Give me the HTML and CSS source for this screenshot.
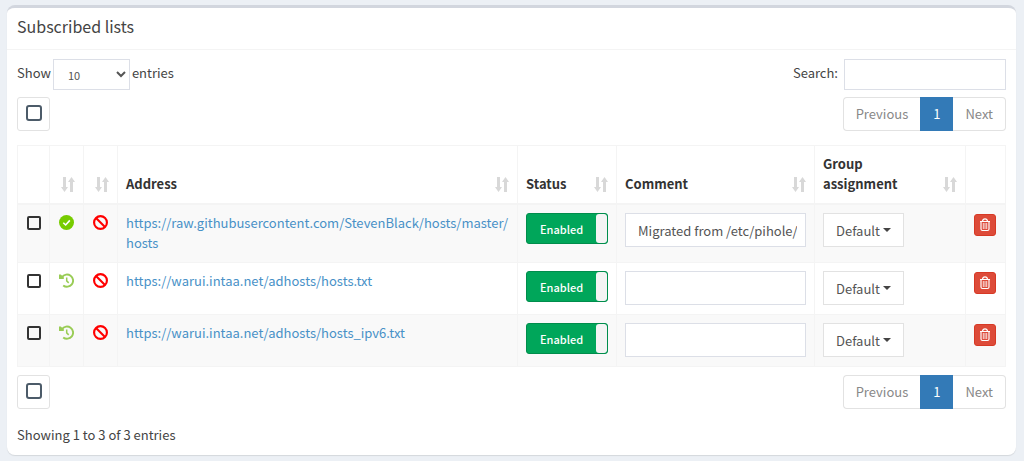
FILE: index.html
```
<!DOCTYPE html>
<html lang="en">

<head>
  <meta charset="UTF-8" />
  <meta name="viewport" content="width=device-width, initial-scale=1.0" />
  <title>Subscribed lists</title>
  <link rel="stylesheet" href="styles.css">
</head>

<body>
  <!-- Shared icons -->
  <svg class="sprite" aria-hidden="true">
    <symbol id="icon-sort" viewBox="0 0 14 15">
      <path d="M2 0h3v10h2L3.500 15 0 10h2zM9 15h3V5h2L10.500 0 7 5h2z" />
    </symbol>
    <symbol id="icon-check" viewBox="0 0 14 14">
      <circle cx="7" cy="7" r="7" fill="#7c0" />
      <path d="M4 7.200l2.200 2.100L10.100 5" fill="none" stroke="#fff" stroke-width="1.500" />
    </symbol>
    <symbol id="icon-history" viewBox="0 0 15 14">
      <path d="M3 3.600A6.100 6.100 0 1 1 4.200 11.900" fill="none" stroke="#9c5" stroke-width="1.900" />
      <path d="M0 1v4.500h4.800V3.800L1.800 1z" fill="#9c5" />
      <path d="M7.700 4v3.400l2 2" fill="none" stroke="#9c5" stroke-width="1.500" />
    </symbol>
    <symbol id="icon-ban" viewBox="0 0 14 14">
      <circle cx="7" cy="7" r="6" fill="none" stroke="#f00" stroke-width="2" />
      <path d="M2.800 2.800l8.400 8.400" stroke="#f00" stroke-width="2" />
    </symbol>
    <symbol id="icon-trash" viewBox="0 0 12 14">
      <g fill="none" stroke="#fff">
        <path d="M1 3.500h10M3.500 3.300C3.700 1.500 4.600.8 6 .8s2.300.7 2.500 2.500" stroke-width="1.200" />
        <path d="M2 3.700v7.300q0 1.500 1.500 1.500h5Q10 12.500 10 11V3.700" stroke-width="1.200" />
        <path d="M4.300 5v6M6 5v6M7.700 5v6" stroke-width=".8" />
      </g>
    </symbol>
  </svg>

  <div class="box">
    <div class="box-header">
      <h3 class="box-title">Subscribed lists</h3>
    </div>

    <div class="box-body">
      <div class="toolbar">
        <label class="length">Show
          <select class="form-control length-select">
            <option>10</option>
            <option>25</option>
            <option>50</option>
            <option>100</option>
          </select>
          entries</label>
        <label class="search">Search: <input type="search" class="form-control search-input" /></label>
      </div>

      <div class="toolbar paging-row">
        <button type="button" class="btn-select" aria-label="Select all"><span class="square"></span></button>
        <nav class="pagination">
          <a href="#">Previous</a>
          <a href="#" class="active">1</a>
          <a href="#">Next</a>
        </nav>
      </div>

      <table class="lists">
        <colgroup>
          <col class="col-check">
          <col class="col-icon">
          <col class="col-icon">
          <col>
          <col class="col-status">
          <col class="col-comment">
          <col class="col-group">
          <col class="col-action">
        </colgroup>
        <thead>
          <tr>
            <th></th>
            <th><div class="sorting"><span></span><svg><use href="#icon-sort" /></svg></div></th>
            <th><div class="sorting"><span></span><svg><use href="#icon-sort" /></svg></div></th>
            <th><div class="sorting"><span>Address</span><svg><use href="#icon-sort" /></svg></div></th>
            <th><div class="sorting"><span>Status</span><svg><use href="#icon-sort" /></svg></div></th>
            <th><div class="sorting"><span>Comment</span><svg><use href="#icon-sort" /></svg></div></th>
            <th><div class="sorting"><span>Group<br />assignment</span><svg><use href="#icon-sort" /></svg></div></th>
            <th></th>
          </tr>
        </thead>
        <tbody>
          <tr>
            <td class="center"><input type="checkbox" class="row-check" aria-label="Select row" /></td>
            <td class="center"><svg class="state"><use href="#icon-check" /></svg></td>
            <td class="center"><svg class="state"><use href="#icon-ban" /></svg></td>
            <td><a href="#">https://raw.githubusercontent.com/StevenBlack/hosts/master/<wbr>hosts</a></td>
            <td><button type="button" class="toggle"><span class="toggle-on">Enabled</span><span class="toggle-handle"></span></button></td>
            <td><input type="text" class="form-control comment" aria-label="Comment" value="Migrated from /etc/pihole/adlists.list" /></td>
            <td><button type="button" class="dropdown">Default <span class="caret"></span></button></td>
            <td><button type="button" class="btn-delete" aria-label="Delete"><svg><use href="#icon-trash" /></svg></button></td>
          </tr>
          <tr>
            <td class="center"><input type="checkbox" class="row-check" aria-label="Select row" /></td>
            <td class="center"><svg class="state"><use href="#icon-history" /></svg></td>
            <td class="center"><svg class="state"><use href="#icon-ban" /></svg></td>
            <td><a href="#">https://warui.intaa.net/adhosts/hosts.txt</a></td>
            <td><button type="button" class="toggle"><span class="toggle-on">Enabled</span><span class="toggle-handle"></span></button></td>
            <td><input type="text" class="form-control comment" aria-label="Comment" /></td>
            <td><button type="button" class="dropdown">Default <span class="caret"></span></button></td>
            <td><button type="button" class="btn-delete" aria-label="Delete"><svg><use href="#icon-trash" /></svg></button></td>
          </tr>
          <tr>
            <td class="center"><input type="checkbox" class="row-check" aria-label="Select row" /></td>
            <td class="center"><svg class="state"><use href="#icon-history" /></svg></td>
            <td class="center"><svg class="state"><use href="#icon-ban" /></svg></td>
            <td><a href="#">https://warui.intaa.net/adhosts/hosts_ipv6.txt</a></td>
            <td><button type="button" class="toggle"><span class="toggle-on">Enabled</span><span class="toggle-handle"></span></button></td>
            <td><input type="text" class="form-control comment" aria-label="Comment" /></td>
            <td><button type="button" class="dropdown">Default <span class="caret"></span></button></td>
            <td><button type="button" class="btn-delete" aria-label="Delete"><svg><use href="#icon-trash" /></svg></button></td>
          </tr>
        </tbody>
      </table>

      <div class="toolbar">
        <button type="button" class="btn-select" aria-label="Select all"><span class="square"></span></button>
        <nav class="pagination">
          <a href="#">Previous</a>
          <a href="#" class="active">1</a>
          <a href="#">Next</a>
        </nav>
      </div>

      <div class="info">Showing 1 to 3 of 3 entries</div>
    </div>
  </div>
</body>

</html>
```
FILE: styles.css
```
* {
  box-sizing: border-box;
}

body {
  margin: 0;
  padding: 5px 8px 6px 7px;
  background-color: #ecf0f5;
  color: #444;
  font-family: "Noto Sans CJK SC", "Open Sans", sans-serif;
  font-size: 13px;
  line-height: 20px;
}

button,
input,
select {
  margin: 0;
  font-family: inherit;
  font-size: 13px;
  color: #555;
}

a {
  color: #4891c7;
  text-decoration: none;
}

.sprite {
  display: none;
}

/* Box */
.box {
  background-color: #fff;
  border-top: 3px solid #d2d6de;
  border-radius: 8px;
  box-shadow: 0 1px 1px rgba(0, 0, 0, 0.1);
}

.box-header {
  padding: 7px 10px 11px;
  border-bottom: 1px solid #f4f4f4;
}

.box-title {
  margin: 0;
  font-size: 16px;
  font-weight: 400;
  line-height: 23px;
}

.box-body {
  padding: 9px 10px 10px;
}

/* Rows above and below the table */
.toolbar {
  display: flex;
  align-items: flex-start;
  justify-content: space-between;
}

.paging-row {
  margin: 7px 0 14px;
}

.length,
.search {
  display: flex;
  line-height: 28px;
}

.length {
  gap: 2px;
}

.search {
  gap: 6px;
}

.form-control {
  border: 1px solid #dcdfe7;
  border-radius: 0;
  background-color: #fff;
  outline: none;
}

.length-select {
  width: 77px;
  height: 31px;
  padding: 4px 10px;
  font-size: 11px;
}

.search-input {
  width: 162px;
  height: 31px;
  padding: 4px 10px;
}

.btn-select {
  display: flex;
  align-items: center;
  justify-content: center;
  width: 33px;
  height: 34px;
  padding: 0 0 2px;
  background-color: #fff;
  border: 1px solid #e2e2e2;
  border-radius: 3px;
}

.square {
  width: 16px;
  height: 16px;
  border: 2px solid #4c5b69;
  border-radius: 3px;
}

.pagination {
  display: flex;
}

.pagination a {
  padding: 6px 12px;
  border: 1px solid #e2e2e2;
  color: #888;
}

.pagination a:first-child {
  border-right: 0;
  border-radius: 4px 0 0 4px;
}

.pagination a:last-child {
  border-left: 0;
  border-radius: 0 4px 4px 0;
}

.pagination .active {
  background-color: #337ab7;
  border-color: #337ab7;
  color: #fff;
}

/* Table */
.lists {
  width: 100%;
  margin-bottom: 8px;
  border-collapse: collapse;
  table-layout: fixed;
}

.col-check {
  width: 32px;
}

.col-icon {
  width: 34px;
}

.col-status {
  width: 99px;
}

.col-comment {
  width: 198px;
}

.col-group {
  width: 151px;
}

.col-action {
  width: 40px;
}

.lists th,
.lists td {
  border: 1px solid #f4f4f4;
  text-align: left;
}

.lists th {
  padding: 8px 8px 9px;
  border-bottom-width: 2px;
  color: #333;
  vertical-align: bottom;
}

.lists td {
  padding: 8px 8px 9px;
  vertical-align: top;
}

.lists td.center {
  padding-left: 0;
  padding-right: 0;
  text-align: center;
}

.lists tbody tr:nth-child(odd) {
  background-color: #f9f9f9;
}

.sorting {
  display: flex;
  align-items: flex-end;
  justify-content: space-between;
  gap: 3px;
}

.sorting svg {
  flex: none;
  width: 14px;
  height: 15px;
  margin-bottom: 2px;
  fill: #d8d8d8;
}

.row-check {
  appearance: none;
  display: block;
  width: 14px;
  height: 14px;
  margin: 3px auto 0;
  border: 2px solid #333;
  border-radius: 2px;
}

.state {
  display: block;
  width: 15px;
  height: 15px;
  margin: 2px auto 0;
}

.toggle {
  display: flex;
  width: 82px;
  height: 31px;
  padding: 0;
  overflow: hidden;
  background-color: #00a65a;
  border: 1px solid #008d4c;
  border-radius: 3px;
}

.toggle-on {
  flex: 1;
  color: #fff;
  font-size: 11px;
  font-weight: 500;
  line-height: 30px;
}

.toggle-handle {
  width: 11px;
  height: 29px;
  background-color: #f4f4f4;
  border-radius: 3px;
}

.comment {
  display: block;
  width: 100%;
  height: 34px;
  padding: 6px 8px 6px 12px;
}

.dropdown {
  display: flex;
  align-items: center;
  gap: 3px;
  height: 34px;
  padding: 0 12px;
  background-color: #fff;
  border: 1px solid #e2e2e2;
}

.caret {
  border-top: 4px solid #444;
  border-left: 4px solid transparent;
  border-right: 4px solid transparent;
}

.btn-delete {
  display: flex;
  align-items: center;
  justify-content: center;
  width: 22px;
  height: 22px;
  margin-top: 1px;
  padding: 0;
  background-color: #dd4b39;
  border: 1px solid #d73925;
  border-radius: 3px;
}

.btn-delete svg {
  width: 12px;
  height: 14px;
}

.info {
  padding-top: 16px;
}
```
